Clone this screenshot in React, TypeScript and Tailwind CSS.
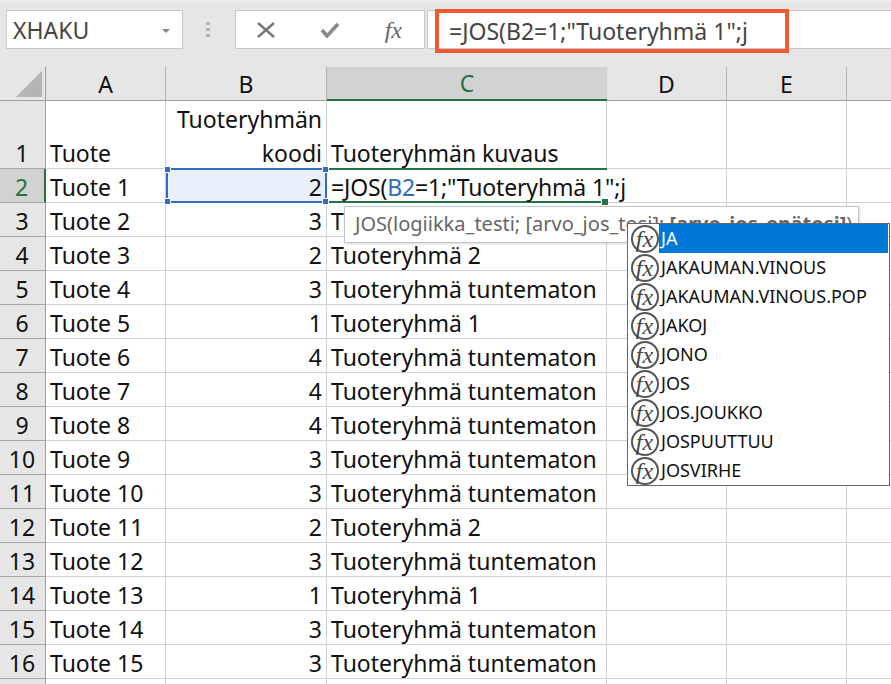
const COLS = [
  { letter: "A", width: "w-[120px]" },
  { letter: "B", width: "w-[161px]" },
  { letter: "C", width: "w-[280px]" },
  { letter: "D", width: "w-[120px]" },
  { letter: "E", width: "w-[120px]" },
];

const ROWS: [string, number, string][] = [
  ["Tuote 2", 3, "Tuoteryhmä tuntematon"],
  ["Tuote 3", 2, "Tuoteryhmä 2"],
  ["Tuote 4", 3, "Tuoteryhmä tuntematon"],
  ["Tuote 5", 1, "Tuoteryhmä 1"],
  ["Tuote 6", 4, "Tuoteryhmä tuntematon"],
  ["Tuote 7", 4, "Tuoteryhmä tuntematon"],
  ["Tuote 8", 4, "Tuoteryhmä tuntematon"],
  ["Tuote 9", 3, "Tuoteryhmä tuntematon"],
  ["Tuote 10", 3, "Tuoteryhmä tuntematon"],
  ["Tuote 11", 2, "Tuoteryhmä 2"],
  ["Tuote 12", 3, "Tuoteryhmä tuntematon"],
  ["Tuote 13", 1, "Tuoteryhmä 1"],
  ["Tuote 14", 3, "Tuoteryhmä tuntematon"],
  ["Tuote 15", 3, "Tuoteryhmä tuntematon"],
];

const FUNCTIONS = [
  "JA",
  "JAKAUMAN.VINOUS",
  "JAKAUMAN.VINOUS.POP",
  "JAKOJ",
  "JONO",
  "JOS",
  "JOS.JOUKKO",
  "JOSPUUTTUU",
  "JOSVIRHE",
];

const font = "font-['Noto_Sans',sans-serif]";

function Handle({ className }: { className: string }) {
  return <span className={`absolute h-[7px] w-[7px] border border-white bg-[#2f6cc4] ${className}`} />;
}

function RowHeader({ label, active }: { label: number; active?: boolean }) {
  return (
    <div
      className={`flex w-[46px] shrink-0 items-end justify-center border-b border-[#a6a6a6] pr-[1px] text-[23px] leading-[30px] ${
        active
          ? "border-r-[2px] border-r-[#217346] bg-[#d2d2d2] text-[#217346]"
          : "border-r border-r-[#9f9f9f] bg-[#e6e6e6] text-[#111]"
      }`}
    >
      {label}
    </div>
  );
}

function Cell({ width, right, children }: { width: string; right?: boolean; children?: React.ReactNode }) {
  return (
    <div
      className={`flex ${width} shrink-0 items-end border-r border-b border-[#d0d0d0] px-[4px] text-[23px] leading-[30px] text-[#111] ${
        right ? "justify-end" : ""
      }`}
    >
      {children}
    </div>
  );
}

function EmptyTail() {
  return (
    <>
      <Cell width="w-[120px]" />
      <Cell width="w-[120px]" />
      <div className="flex-1 border-b border-[#d0d0d0]" />
    </>
  );
}

function FxIcon() {
  return (
    <span className="flex h-[28px] w-[28px] shrink-0 items-center justify-center rounded-full border-2 border-[#555] bg-white pr-[1px] font-['Liberation_Serif',serif] text-[24px] italic leading-none text-[#444]">
      fx
    </span>
  );
}

export default function App() {
  return (
    <div className={`relative h-[684px] w-[891px] overflow-hidden bg-white ${font}`}>
      {/* Formula bar */}
      <div className="flex h-[67px] items-start gap-[52px] border-t-[3px] border-[#ececec] bg-[#e6e6e6] pt-[7px] pl-[6px]">
        <div className="flex h-[39px] w-[177px] shrink-0 items-center justify-between border border-[#c8c8c8] bg-white pt-[1px] pl-[6px] pr-[12px] text-[23px] text-[#444]">
          XHAKU
          <span className="mt-[1px] h-0 w-0 border-x-[4px] border-t-[4px] border-x-transparent border-t-[#888]" />
        </div>
        <div className="flex flex-1 items-start">
          <div className="relative flex h-[39px] w-[190px] shrink-0 items-center justify-between border border-[#c8c8c8] bg-white pl-[21px] pr-[22px]">
            <span className="absolute -left-[30px] top-[11px] flex flex-col gap-[3px]">
              <i className="h-[3px] w-[4px] bg-[#b4b4b4]" />
              <i className="h-[3px] w-[4px] bg-[#b4b4b4]" />
              <i className="h-[3px] w-[4px] bg-[#b4b4b4]" />
            </span>
            <svg width="18" height="16" viewBox="0 0 18 16" fill="none" stroke="#777" strokeWidth="2.4">
              <path d="M1 1 17 15M17 1 1 15" />
            </svg>
            <svg width="20" height="16" viewBox="0 0 20 16" fill="none" stroke="#8a8a8a" strokeWidth="3.6">
              <path d="M2 8 7 14 18 2" />
            </svg>
            <span className="font-['Liberation_Serif',serif] text-[24px] italic leading-none text-[#666]">fx</span>
          </div>
          <div className="relative ml-[2px] h-[39px] flex-1 border-y border-l border-[#c8c8c8] bg-white">
            <div className="absolute -top-[2px] left-[7px] flex h-[44px] w-[354px] items-center border-[4px] border-[#f15a30] pl-[10px] text-[23px] leading-none text-[#444]">
              =JOS(B2=1;"Tuoteryhmä 1";j
            </div>
          </div>
        </div>
      </div>

      {/* Column headers */}
      <div className="flex h-[34px]">
        <div className="flex w-[46px] shrink-0 items-end justify-end border-r border-b border-[#9f9f9f] bg-[#e6e6e6] p-[3px]">
          <span className="h-0 w-0 border-b-[26px] border-l-[26px] border-b-[#b4b4b4] border-l-transparent" />
        </div>
        {COLS.map((col) => (
          <div
            key={col.letter}
            className={`flex ${col.width} shrink-0 items-center justify-center pt-[1px] text-[23px] ${
              col.letter === "C"
                ? "border-b-[2px] border-[#217346] bg-[#d2d2d2] text-[#217346]"
                : "border-r border-b border-r-[#b0b0b0] border-b-[#9f9f9f] bg-[#e6e6e6] text-[#111]"
            }`}
          >
            {col.letter}
          </div>
        ))}
        <div className="flex-1 border-b border-[#9f9f9f] bg-[#e6e6e6]" />
      </div>

      {/* Row 1 */}
      <div className="flex h-[68px]">
        <RowHeader label={1} />
        <Cell width="w-[120px]">Tuote</Cell>
        <Cell width="w-[161px]" right>
          <span className="-mb-[2px] text-right leading-[34px]">Tuoteryhmän koodi</span>
        </Cell>
        <Cell width="w-[280px]">Tuoteryhmän kuvaus</Cell>
        <EmptyTail />
      </div>

      {/* Row 2, the one being edited */}
      <div className="flex h-[34px]">
        <RowHeader label={2} active />
        <Cell width="w-[120px]">Tuote 1</Cell>
        <div className="relative z-10 -mt-[1px] flex w-[161px] shrink-0 items-end justify-end border-2 border-[#2f6cc4] bg-[#e8eff8] pr-[3px] text-[23px] leading-[28px] text-[#111]">
          2
          <Handle className="-left-[4px] -top-[4px]" />
          <Handle className="-right-[4px] -top-[4px]" />
          <Handle className="-left-[4px] -bottom-[4px]" />
          <Handle className="-right-[4px] -bottom-[4px]" />
        </div>
        <div className="relative -mt-[1px] flex w-[280px] shrink-0 items-end whitespace-nowrap border-y-2 border-[#217346] pl-[4px] text-[23px] leading-[28px] tracking-[-0.15px] text-[#111]">
          <span>
            =JOS(<span className="text-[#2f6cc4]">B2</span>=1;"Tuoteryhmä 1";j
          </span>
          <span className="absolute -right-[1px] -bottom-[4px] h-[6px] w-[7px] border-l border-white bg-[#217346]" />
        </div>
        <EmptyTail />
      </div>

      {/* Rows 3 and on */}
      {ROWS.map(([name, code, group], i) => (
        <div key={name} className="flex h-[34px]">
          <RowHeader label={i + 3} />
          <Cell width="w-[120px]">{name}</Cell>
          <Cell width="w-[161px]" right>
            {code}
          </Cell>
          <Cell width="w-[280px]">{group}</Cell>
          <EmptyTail />
        </div>
      ))}
      <div className="flex h-[34px]">
        <div className="w-[46px] shrink-0 border-r border-b border-[#9f9f9f] bg-[#e6e6e6]" />
        <Cell width="w-[120px]" />
        <Cell width="w-[161px]" />
        <Cell width="w-[280px]" />
        <EmptyTail />
      </div>

      {/* Argument tooltip */}
      <div className="absolute left-[344px] top-[206px] flex h-[37px] w-[515px] items-center whitespace-nowrap border border-[#c4c4c4] bg-white pb-[2px] pl-[10px] text-[20px] text-[#666] shadow-[1px_1px_2px_rgba(0,0,0,0.15)]">
        JOS(logiikka_testi; [arvo_jos_tosi];&nbsp;<b className="font-bold">[arvo_jos_epätosi]</b>)
      </div>

      {/* Function autocomplete */}
      <div className="absolute left-[627px] top-[223px] flex w-[263px] flex-col border border-[#666] bg-white">
        {FUNCTIONS.map((fn, i) => (
          <div key={fn} className="flex h-[29px] items-center pl-[3px] pr-[1px]">
            <FxIcon />
            <span
              className={`flex h-full flex-1 items-center pl-[2px] text-[18px] ${
                i === 0 ? "bg-[#0078d7] text-white" : "text-[#111]"
              }`}
            >
              {fn}
            </span>
          </div>
        ))}
      </div>
    </div>
  );
}
